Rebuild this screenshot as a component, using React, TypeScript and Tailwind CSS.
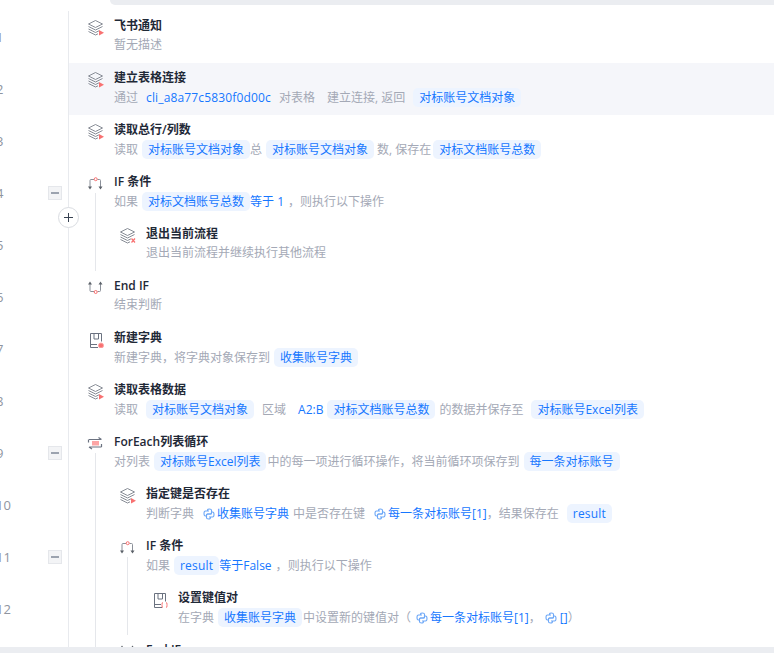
import React from 'react';

const FONT = '"Open Sans", "Noto Sans CJK SC", sans-serif';

// stacked layers, with a small red badge at the lower right
const LayersIcon: React.FC<{ badge?: 'play' | 'x' }> = ({ badge = 'play' }) => (
    <svg width="18" height="18" viewBox="0 0 18 18" fill="none" stroke="#7b808a" strokeWidth="0.9">
        <path d="M9.500 2.500 16.500 6 9.500 9.500 2.500 6Z" />
        <path d="M2.500 8.500 9.500 12 16.500 8.500" />
        <path d="M2.500 11 9.500 14.500 13 12.800" />
        <path d="M2.500 13.500 9.500 17 12 15.800" />
        {badge === 'play' ? (
            <path d="M13 12 18 14.800 13 17.500Z" fill="#f87171" stroke="none" />
        ) : (
            <path d="M13.500 12.500 17 16.500M17 12.500 13.500 16.500" stroke="#f87171" strokeWidth="1.200" />
        )}
    </svg>
);

const IfIcon: React.FC = () => (
    <svg viewBox="0 0 18 18" fill="none" stroke="#8b9099" strokeWidth="1" className="w-[18px] h-[18px]">
        <path d="M4 13V6.500Q4 5.500 5 5.500H8M11.500 5.500H13.500Q14.500 5.500 14.500 6.500V13" />
        <path d="M2 12.500H6L4 15.500ZM12.500 12.500H16.500L14.500 15.500Z" fill="#5b6068" stroke="none" />
        <circle cx="9.700" cy="5.200" r="1.500" stroke="#f87171" />
    </svg>
);

const EndIfIcon: React.FC = () => (
    <svg viewBox="0 0 18 18" fill="none" stroke="#8b9099" strokeWidth="1" className="w-[18px] h-[18px]">
        <path d="M4 6V12.500Q4 13.500 5 13.500H8M11.500 13.500H13.500Q14.500 13.500 14.500 12.500V6" />
        <path d="M2 6.500H6L4 3.500ZM12.500 6.500H16.500L14.500 3.500Z" fill="#5b6068" stroke="none" />
        <circle cx="9.700" cy="14" r="1.500" stroke="#f87171" />
    </svg>
);

const DictIcon: React.FC<{ badge?: 'dot' | 'pair' }> = ({ badge = 'dot' }) => (
    <svg width="18" height="18" viewBox="0 0 18 18" fill="none" stroke="#6b7280" strokeWidth="1">
        <path d="M12 17.500H4.500V3.500H15.500V11.500" />
        <path d="M4.500 14.500H11" />
        <path d="M8 3.500V9H12.500V3.500" />
        {badge === 'dot' ? (
            <circle cx="15" cy="15.500" r="2.500" fill="#f87171" stroke="#fca5a5" />
        ) : (
            <path d="M13 12.500Q12 12.500 12 14V14.500L11.500 15 12 15.500V16Q12 17.500 13 17.500M16 12.500Q17 12.500 17 14V14.500L17.500 15 17 15.500V16Q17 17.500 16 17.500" stroke="#f87171" />
        )}
    </svg>
);

const LoopIcon: React.FC = () => (
    <svg viewBox="0 0 18 18" fill="none" stroke="#6b7280" strokeWidth="1.200" className="w-[18px] h-[18px]">
        <path d="M3 5.500H15M12.500 3.500 15.500 5.500M15.500 13H3.500M6 15 3 13" />
        <path d="M2.500 5.500V8.500M15.500 13V10" />
        <rect x="6" y="7" width="7" height="4.500" fill="#fca5a5" stroke="none" />
    </svg>
);

const PY_HALF = 'M6 3H4.500V2.200Q4.500 1 6.500 1T8.500 2.200V5Q8.500 6 7.500 6H4.500Q3.500 6 3.500 7V8H2.500Q1 8 1 5.500T2.500 3H6';

const PyIcon: React.FC<{ className?: string }> = ({ className = '' }) => (
    <svg className={className} width="12" height="12" viewBox="0 0 12 12" fill="none" stroke="#6ea8f7" strokeWidth="1.100">
        <path d={PY_HALF} />
        <path d={PY_HALF} transform="rotate(180 6 6)" />
    </svg>
);

const Chip: React.FC<{ children: React.ReactNode; className?: string }> = ({ children, className = '' }) => (
    <span className={`h-[19px] leading-[19px] px-[6px] rounded-[5px] bg-[#edf4ff] text-[#1677ff] shrink-0 ${className}`}>
        {children}
    </span>
);

const Blue: React.FC<{ children: React.ReactNode; className?: string }> = ({ children, className = '' }) => (
    <span className={`text-[#1677ff] shrink-0 ${className}`}>{children}</span>
);

const Plain: React.FC<{ children: React.ReactNode; className?: string }> = ({ children, className = '' }) => (
    <span className={`shrink-0 ${className}`}>{children}</span>
);

interface RowProps {
    num: number;
    icon: React.ReactNode;
    title: string;
    depth?: number;
    // the block below this step is indented, so a guide runs from its icon
    opens?: boolean;
    collapse?: boolean;
    active?: boolean;
    addAfter?: boolean;
    children: React.ReactNode;
}

const Row: React.FC<RowProps> = ({ num, icon, title, depth = 0, opens, collapse, active, addAfter, children }) => (
    <div className={`flex h-[52px] shrink-0 ${active ? 'bg-[#f5f6fa]' : ''}`}>
        <div className="relative flex items-center w-[69px] shrink-0 bg-white border-r border-[#e8eaee]">
            <span className="ml-[-4px] mt-[2px] text-[13px] text-[#8f95a0]">{num}</span>
            {collapse && (
                <div className="absolute left-[48px] top-[19px] flex items-center justify-center w-[14px] h-[14px] bg-[#f3f4f6] border border-[#e5e7eb]">
                    <div className="w-[8px] h-[2px] bg-[#9ca3af]" />
                </div>
            )}
            {addAfter && (
                <div className="absolute left-[58px] top-[40px] z-10 flex items-center justify-center w-[21px] h-[21px] rounded-full bg-white border border-[#d9dce1]">
                    <svg width="11" height="11" viewBox="0 0 11 11" stroke="#374151" strokeWidth="1">
                        <path d="M5.500 1V10M1 5.500H10" />
                    </svg>
                </div>
            )}
        </div>
        <div className="flex flex-1 min-w-0 pl-[10px]">
            {Array.from({ length: depth }).map((_, i) => (
                <div key={i} className="w-[32px] pl-[16px] shrink-0">
                    <div className="w-px h-full bg-[#e5e7eb]" />
                </div>
            ))}
            <div className="flex flex-col items-center w-[32px] pt-[5px] shrink-0">
                <div className="flex items-center justify-center h-[21px]">{icon}</div>
                {opens && <div className="w-px flex-1 bg-[#e5e7eb]" />}
            </div>
            <div className="flex flex-col pl-[3px] pt-[5px] min-w-0">
                <div className="h-[19px] leading-[19px] text-[12px] font-semibold text-[#1f2937] whitespace-nowrap">{title}</div>
                <div className="flex items-center h-[19px] mt-[1px] text-[12px] text-[#a4a9b6] whitespace-nowrap">{children}</div>
            </div>
        </div>
    </div>
);

const App: React.FC = () => {
    return (
        <div className="flex flex-col w-[774px] h-[653px] overflow-hidden bg-white" style={{ fontFamily: FONT }}>
            <div className="ml-[110px] h-[5px] shrink-0 bg-[#ebedf1] rounded-bl-[6px]" />
            <div className="flex flex-col flex-1 min-h-0 pt-[6px] overflow-hidden">
                <Row num={1} icon={<LayersIcon />} title="飞书通知">
                    <Plain className="mb-[2px]">暂无描述</Plain>
                </Row>
                <Row num={2} icon={<LayersIcon />} title="建立表格连接" active>
                    <Plain>通过</Plain>
                    <Blue className="ml-[8px] tracking-[0.15px]">cli_a8a77c5830f0d00c</Blue>
                    <Plain className="ml-[8px]">对表格</Plain>
                    <Plain className="ml-[12px]">建立连接, 返回</Plain>
                    <Chip className="ml-[8px]">对标账号文档对象</Chip>
                </Row>
                <Row num={3} icon={<LayersIcon />} title="读取总行/列数">
                    <Plain>读取</Plain>
                    <Chip className="ml-[4px]">对标账号文档对象</Chip>
                    <Plain>总</Plain>
                    <Chip className="ml-[4px]">对标账号文档对象</Chip>
                    <Plain className="ml-[3px]">数, 保存在</Plain>
                    <Chip className="ml-[2px]">对标文档账号总数</Chip>
                </Row>
                <Row num={4} icon={<IfIcon />} title="IF 条件" opens collapse addAfter>
                    <Plain>如果</Plain>
                    <Chip className="ml-[4px]">对标文档账号总数</Chip>
                    <Blue>等于 1</Blue>
                    <Plain className="ml-[4px]">，</Plain>
                    <Plain>则执行以下操作</Plain>
                </Row>
                <Row num={5} depth={1} icon={<LayersIcon badge="x" />} title="退出当前流程">
                    <Plain className="mb-[2px]">退出当前流程并继续执行其他流程</Plain>
                </Row>
                <Row num={6} icon={<EndIfIcon />} title="End IF">
                    <Plain className="mb-[2px]">结束判断</Plain>
                </Row>
                <Row num={7} icon={<DictIcon />} title="新建字典">
                    <Plain>新建字典，将字典对象保存到</Plain>
                    <Chip className="ml-[4px]">收集账号字典</Chip>
                </Row>
                <Row num={8} icon={<LayersIcon />} title="读取表格数据">
                    <Plain>读取</Plain>
                    <Chip className="ml-[8px]">对标账号文档对象</Chip>
                    <Plain className="ml-[8px]">区域</Plain>
                    <Blue className="ml-[12px]">A2:B</Blue>
                    <Chip className="ml-[4px]">对标文档账号总数</Chip>
                    <Plain className="ml-[4px]">的数据并保存至</Plain>
                    <Chip className="ml-[8px]">对标账号Excel列表</Chip>
                </Row>
                <Row num={9} icon={<LoopIcon />} title="ForEach列表循环" opens collapse>
                    <Plain>对列表</Plain>
                    <Chip className="ml-[4px]">对标账号Excel列表</Chip>
                    <Plain className="ml-[1px]">中的每一项进行循环操作，将当前循环项保存到</Plain>
                    <Chip className="ml-[4px]">每一条对标账号</Chip>
                </Row>
                <Row num={10} depth={1} icon={<LayersIcon />} title="指定键是否存在">
                    <Plain>判断字典</Plain>
                    <PyIcon className="ml-[9px] shrink-0" />
                    <Blue className="ml-[2px]">收集账号字典</Blue>
                    <Plain className="ml-[4px]">中是否存在键</Plain>
                    <PyIcon className="ml-[9px] shrink-0" />
                    <Blue className="ml-[2px]">每一条对标账号[1]</Blue>
                    <Plain>，结果保存在</Plain>
                    <Chip className="ml-[8px] tracking-[0.2px]">result</Chip>
                </Row>
                <Row num={11} depth={1} icon={<IfIcon />} title="IF 条件" opens collapse>
                    <Plain>如果</Plain>
                    <Chip className="ml-[4px] tracking-[0.2px]">result</Chip>
                    <Blue>等于False</Blue>
                    <Plain className="ml-[4px]">，</Plain>
                    <Plain>则执行以下操作</Plain>
                </Row>
                <Row num={12} depth={2} icon={<DictIcon badge="pair" />} title="设置键值对">
                    <Plain>在字典</Plain>
                    <Chip className="ml-[4px]">收集账号字典</Chip>
                    <Plain className="ml-[1px]">中设置新的键值对（</Plain>
                    <PyIcon className="ml-[5px] shrink-0" />
                    <Blue className="ml-[2px]">每一条对标账号[1]</Blue>
                    <Plain>，</Plain>
                    <PyIcon className="ml-[4px] shrink-0" />
                    <Blue className="ml-[3px]">[]</Blue>
                    <Plain>）</Plain>
                </Row>
                <Row num={13} depth={1} icon={<EndIfIcon />} title="End IF">
                    <Plain className="mb-[2px]">结束判断</Plain>
                </Row>
            </div>
            <div className="h-[6px] shrink-0 bg-[#ebedf1]" />
        </div>
    );
};

export default App;
